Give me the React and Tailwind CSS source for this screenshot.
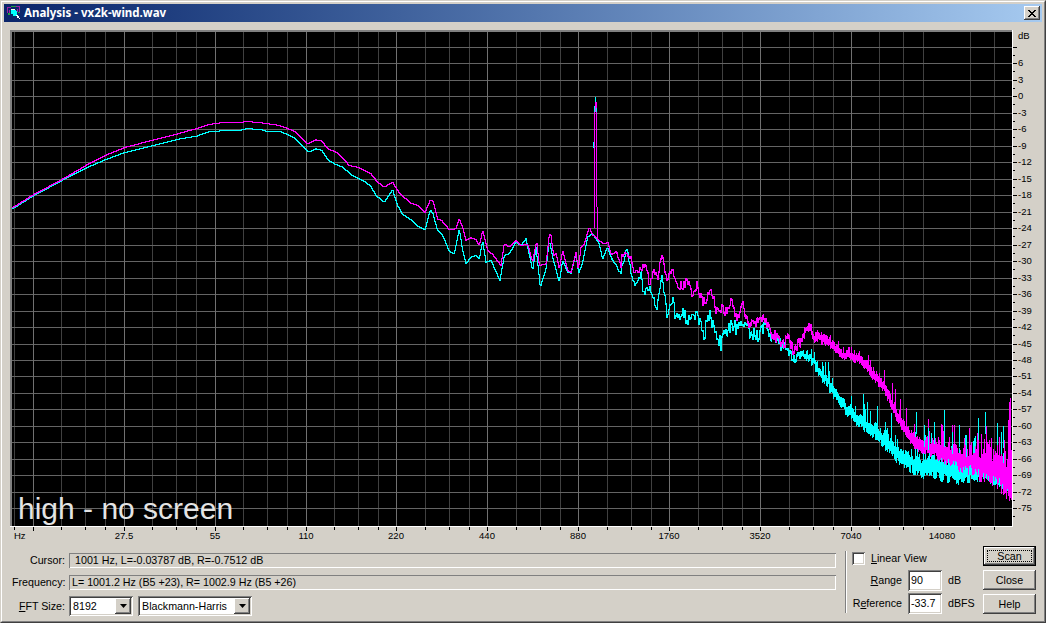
import React from 'react';

const RAISED =
  'shadow-[inset_-1px_-1px_0_#404040,inset_1px_1px_0_#ffffff,inset_-2px_-2px_0_#808080,inset_2px_2px_0_#d4d0c8]';
const SUNKEN =
  'shadow-[inset_1px_1px_0_#808080,inset_-1px_-1px_0_#ffffff,inset_2px_2px_0_#404040,inset_-2px_-2px_0_#d4d0c8]';

// zoomed crop readings -> page pixels
const crop = (ox, oy, pts) => pts.map(([x, y]) => [ox + x / 3, oy + y / 3]);

const MAGENTA = [
  [12, 207], [33, 194], [61, 179], [85, 165], [105, 154.5], [124, 147], [152, 139.5], [176, 133.5], [196, 128], [208, 124],
  ...crop(220, 110, [[0, 37], [60, 37], [70, 34], [90, 34], [130, 38], [170, 44], [200, 54], [220, 62], [240, 80], [260, 100], [285, 88], [303, 92], [320, 115], [350, 127], [385, 165], [410, 170], [450, 190], [470, 215], [490, 230], [515, 215], [535, 248], [570, 278], [590, 285], [612, 307], [628, 268], [636, 272], [650, 325]]),
  ...crop(420, 90, [[0, 360], [15, 365], [25, 328], [35, 333], [48, 385], [62, 390], [85, 418], [105, 415], [115, 385], [125, 410], [135, 450], [150, 442], [165, 447], [175, 465], [185, 420], [200, 480], [215, 492], [240, 525], [250, 460], [265, 470], [285, 450], [300, 465], [320, 460], [335, 515], [347, 450], [355, 525], [375, 520], [385, 432], [390, 435], [398, 495], [405, 488], [415, 535], [425, 480], [440, 540], [450, 545], [465, 485], [472, 540], [480, 470], [490, 460], [505, 410], [515, 435]]),
  [593, 235], [598, 240],
  ...crop(420, 90, [[550, 460], [560, 455], [572, 495], [585, 480], [600, 530]]),
  ...crop(620, 230, [[0, 75], [15, 70], [30, 85], [40, 130], [55, 120], [75, 100], [85, 160], [100, 120], [110, 145], [122, 75], [140, 150], [155, 115], [175, 170], [200, 155], [215, 190], [228, 160], [240, 205], [255, 215], [270, 175], [285, 235], [320, 240], [330, 205], [345, 265], [365, 225], [385, 285], [430, 260], [450, 310], [470, 320], [490, 345], [500, 320], [520, 360], [565, 285], [580, 320], [620, 330], [660, 370]]),
  ...crop(800, 320, [[180, 115], [215, 160], [250, 200], [280, 270], [310, 320], [340, 365], [400, 385], [470, 410], [530, 430], [560, 440], [600, 460], [632, 500]]),
];

const CYAN = [
  [12, 208], [33, 195], [61, 180], [85, 167.5], [105, 159], [124, 152], [152, 145], [176, 139], [196, 135.5], [207, 131.5],
  ...crop(220, 110, [[0, 61], [50, 61], [75, 55], [115, 56], [135, 62], [175, 62], [200, 72], [220, 82], [262, 125], [285, 115], [303, 120], [320, 147], [340, 160], [365, 170], [390, 192], [430, 212], [450, 228], [465, 255], [490, 275], [515, 238], [530, 285], [545, 312], [570, 328], [590, 347], [612, 358], [628, 298], [636, 310], [650, 362]]),
  ...crop(420, 90, [[0, 415], [10, 415], [25, 360], [35, 370], [50, 420], [65, 435], [85, 482], [100, 490], [115, 415], [125, 480], [135, 520], [150, 500], [165, 495], [175, 505], [185, 450], [195, 515], [210, 510], [237, 570], [250, 495], [265, 490], [285, 455], [300, 465], [315, 445], [335, 540], [345, 470], [358, 590], [375, 535], [385, 450], [395, 500], [415, 575], [425, 510], [440, 545], [450, 548], [465, 490], [473, 550], [485, 515], [500, 440], [515, 430]]),
  [593, 235], [598, 243],
  ...crop(420, 90, [[545, 505], [560, 470], [575, 510], [600, 550]]),
  ...crop(620, 230, [[0, 120], [18, 52], [30, 125], [40, 165], [60, 130], [70, 200], [78, 170], [95, 185], [108, 245], [122, 135], [140, 260], [155, 200], [165, 270], [185, 235], [200, 285], [215, 235], [235, 270], [250, 310], [265, 250], [300, 340], [320, 290], [345, 290], [375, 290], [410, 320], [430, 290], [480, 340], [520, 380], [560, 370]]),
  ...crop(800, 320, [[130, 260], [170, 295], [230, 340], [290, 400], [340, 430], [420, 445], [480, 455], [560, 460], [620, 500], [632, 510]]),
];

const lerp = (pts, x) => {
  let i = 1;
  while (i < pts.length - 1 && pts[i][0] < x) i++;
  const [x0, y0] = pts[i - 1];
  const [x1, y1] = pts[i];
  return y0 + ((y1 - y0) * (x - x0)) / (x1 - x0 || 1);
};

const makeRandom = (seed) => {
  let s = seed;
  return () => {
    s = (s * 1664525 + 1013904223) % 4294967296;
    return s / 4294967296;
  };
};

// one vertical run per pixel column, like the analyser's own non antialiased plot
const tracePath = (pts, { seed, thick, jitter, spikeChance, spikeSize, extras }) => {
  const rnd = makeRandom(seed);
  let d = '';
  let prev = lerp(pts, 12);
  for (let x = 12; x < 1012; x++) {
    const y = lerp(pts, x) + (rnd() - 0.5) * lerp(jitter, x);
    const t = lerp(thick, x);
    const wobble = t > 1 ? (rnd() - 0.5) * t * 0.6 : 0;
    let top = Math.min(prev, y) - t / 2 + wobble;
    const bottom = Math.max(prev, y) + t / 2 + wobble;
    if (rnd() < lerp(spikeChance, x)) top -= rnd() * lerp(spikeSize, x);
    d += `M${x}.5 ${Math.round(top)}V${Math.round(bottom) + 1}`;
    prev = y;
  }
  extras.forEach(([x, a, b]) => {
    d += `M${x}.5 ${a}V${b}`;
  });
  return d;
};

const magentaPath = tracePath(MAGENTA, {
  seed: 7,
  thick: [[12, 0], [610, 0], [690, 0.5], [780, 1.5], [840, 5], [900, 8], [950, 14], [1000, 26], [1012, 30]],
  jitter: [[12, 0], [600, 0], [625, 4], [700, 10], [790, 10], [850, 3], [1012, 3]],
  spikeChance: [[12, 0], [780, 0], [800, 0.2], [900, 0.25], [1012, 0.4]],
  spikeSize: [[12, 0], [800, 5], [880, 9], [905, 22], [1012, 26]],
  extras: [[594, 112, 228], [595, 102, 112], [596, 102, 207], [597, 207, 238], [1008, 420, 494], [1009, 402, 496], [1010, 398, 498]],
});

const cyanPath = tracePath(CYAN, {
  seed: 21,
  thick: [[12, 0], [610, 0], [700, 0.5], [790, 1.5], [840, 7], [900, 12], [950, 17], [1000, 8], [1012, 6]],
  jitter: [[12, 0], [600, 0], [625, 5], [700, 14], [760, 14], [820, 8], [850, 3], [1012, 3]],
  spikeChance: [[12, 0], [790, 0], [820, 0.2], [900, 0.3], [1012, 0.3]],
  spikeSize: [[12, 0], [800, 6], [840, 20], [900, 28], [1012, 34]],
  extras: [],
});

// cyan peaks that stand clear of the magenta band
const cyanPeaks = [
  [593, 142, 6], [594, 106, 6], [595, 97, 5], [596, 108, 4],
  [916, 412, 22], [924, 425, 22], [928, 428, 22], [934, 422, 22], [944, 410, 22], [952, 432, 22], [959, 425, 22],
  [966, 435, 22], [978, 418, 22], [985, 412, 22], [997, 423, 22], [1001, 432, 22], [1003, 426, 22],
]
  .map(([x, y, h]) => `M${x}.5 ${y}V${y + h}`)
  .join('');

const OCTAVES = ['13.75', '27.5', '55', '110', '220', '440', '880', '1760', '3520', '7040', '14080'];
const majorX = (k) => Math.floor(33.3 + 90.9 * k);
const minorX = [];
minorX.push(14);
OCTAVES.forEach((_, k) => {
  [28.5, 52.5, 72.5].forEach((off) => {
    const x = Math.floor(33.3 + 90.9 * k + off);
    if (x < 1012) minorX.push(x);
  });
});

const rowY = (n) => Math.round(96.3 + 16.48 * n);
const rows = [];
for (let n = -3; n <= 25; n++) rows.push(n);

const PlotChart = () => (
  <svg width="1032" height="514" viewBox="10 30 1032 514" className="block shrink-0">
    <rect x="10" y="30" width="1003" height="497" fill="#ffffff" />
    <rect x="10" y="30" width="1002" height="496" fill="#808080" />
    <rect x="12" y="32" width="1000" height="494" fill="#000000" />
    <g shapeRendering="crispEdges" strokeWidth="1">
      {minorX.map((x) => (
        <path key={x} d={`M${x}.5 32V526`} stroke="#404040" />
      ))}
      {rows.map((n) => (
        <path key={n} d={`M12 ${rowY(n)}.5H1012`} stroke="#646464" />
      ))}
      {OCTAVES.map((_, k) =>
        k > 9 ? null : <path key={k} d={`M${majorX(k)}.5 32V526`} stroke="#707070" />
      )}
      <path d={cyanPath} stroke="#00ffff" fill="none" />
      <path d={magentaPath} stroke="#ff00ff" fill="none" />
      <path d={cyanPeaks} stroke="#00ffff" fill="none" />
      {minorX.map((x) => (
        <path key={x} d={`M${x}.5 527V530`} stroke="#000000" />
      ))}
      {OCTAVES.map((_, k) =>
        k > 9 ? null : <path key={k} d={`M${majorX(k)}.5 527V531`} stroke="#000000" />
      )}
      {rows.map((n) => (
        <path key={n} d={`M1013 ${rowY(n)}.5H1017`} stroke="#000000" />
      ))}
      {rows.map((n) => (
        <path key={n} d={`M1013 ${rowY(n) + 8}.5H1015`} stroke="#000000" />
      ))}
    </g>
    <text x="18" y="519" fontSize="30" fill="#e4e4e4">high - no screen</text>
    <g fontSize="9.5" fill="#000000">
      <text x="14" y="539">Hz</text>
      {OCTAVES.slice(1).map((label, i) => (
        <text key={label} x={majorX(i + 1)} y="539" textAnchor="middle">{label}</text>
      ))}
      <text x="1018" y="38.5">dB</text>
      {rows.slice(1).map((n) => (
        <text key={n} x="1018" y={rowY(n) + 3}>{-3 * n}</text>
      ))}
    </g>
  </svg>
);

const ComboArrow = () => (
  <div className={`w-4 h-4 bg-[#d4d0c8] flex items-center justify-center ${RAISED}`}>
    <svg width="7" height="4" viewBox="0 0 7 4">
      <path d="M0 0h7L3.5 4z" fill="#000000" />
    </svg>
  </div>
);

const Combo = ({ value, className }) => (
  <div className={`h-5 bg-white flex items-center justify-between pl-[4px] pr-[2px] ${SUNKEN} ${className}`}>
    <span>{value}</span>
    <ComboArrow />
  </div>
);

const StaticField = ({ text, className }) => (
  <div className={`flex-1 h-[15px] flex items-center bg-[#d4d0c8] shadow-[inset_1px_1px_0_#808080,inset_-1px_-1px_0_#ffffff] ${className}`}>
    {text}
  </div>
);

const FieldLabel = ({ children }) => (
  <span className="w-[53px] text-right shrink-0">{children}</span>
);

const NumberRow = ({ label, value, unit }) => (
  <div className="flex items-center h-[21px]">
    <span className="w-[50px] text-right">{label}</span>
    <div className={`w-[34px] h-[21px] ml-[6px] bg-white flex items-center pl-[3px] ${SUNKEN}`}>{value}</div>
    <span className="ml-[6px]">{unit}</span>
  </div>
);

const Button = ({ label, className }) => (
  <button type="button" className={`w-[53px] bg-[#d4d0c8] flex items-center justify-center ${RAISED} ${className}`}>
    {label}
  </button>
);

export default function App() {
  return (
    <div className="w-[1046px] h-[623px] overflow-hidden font-['Liberation_Sans',Arial,sans-serif] text-[10.7px] text-black border border-t-[#d4d0c8] border-l-[#d4d0c8] border-r-[#404040] border-b-[#404040]">
      <div className="h-full bg-[#d4d0c8] border border-t-white border-l-white border-r-[#808080] border-b-[#808080] p-[2px] flex flex-col">
        <div className="h-[18px] shrink-0 flex items-center pl-[2px] pr-[2px] bg-gradient-to-r from-[#0a246a] to-[#a6caf0]">
          <svg width="16" height="16" viewBox="0 0 16 16" className="shrink-0" shapeRendering="crispEdges">
            <path d="M1 2h4v1H1zM10 1h4v1h-4zM1 3h1v5H1zM13 2h1v5h-1zM3 5h1v3H3zM11 4h1v3h-1z" fill="#a020a0" />
            <path d="M5 1h5v1H5zM2 8h2v2H2zM12 7h2v1h-2z" fill="#20a040" />
            <path d="M5 5h5v1H5zM5 6h6v3H5zM7 9h4v2H7z" fill="#00ffff" />
            <path d="M5 4h4v1H5zM10 10h2v1h-2zM11 11h2v2h-2zM13 13h1v1h-1z" fill="#ffffff" />
            <path d="M4 5h1v4H4zM5 9h2v1H5zM7 11h3v1H7z" fill="#003060" />
          </svg>
          <span className="ml-[2px] font-['Noto_Sans',sans-serif] font-bold text-[11.5px] text-white leading-none">
            Analysis - vx2k-wind.wav
          </span>
          <div className={`ml-auto w-4 h-[14px] bg-[#d4d0c8] flex items-center justify-center ${RAISED}`}>
            <svg width="8" height="7" viewBox="0 0 8 7" shapeRendering="crispEdges">
              <path d="M0 0h2v1h1v1h2V1h1V0h2v1H7v1H6v1H5v1h1v1h1v1h1v1H6V6H5V5H3v1H2v1H0V6h1V5h1V4h1V3H2V2H1V1H0z" fill="#000000" />
            </svg>
          </div>
        </div>

        <div className="pl-[6px] pt-[8px] shrink-0">
          <PlotChart />
        </div>

        <div className="flex items-start">
          <div className="ml-[8px] mt-[8px] w-[824px] flex flex-col">
            <div className="flex items-center gap-[4px]">
              <FieldLabel>Cursor:</FieldLabel>
              <StaticField text="1001 Hz, L=-0.03787 dB, R=-0.7512 dB" className="pl-[6px]" />
            </div>
            <div className="flex items-center gap-[4px] mt-[6px]">
              <FieldLabel>Frequency:</FieldLabel>
              <StaticField text="L= 1001.2 Hz (B5 +23), R= 1002.9 Hz (B5 +26)" className="pl-[3px]" />
            </div>
            <div className="flex items-center gap-[4px] mt-[6px]">
              <FieldLabel><span className="underline">F</span>FT Size:</FieldLabel>
              <Combo value="8192" className="w-[64px]" />
              <Combo value="Blackmann-Harris" className="w-[114px] ml-px" />
            </div>
          </div>

          <div className="ml-[9px] mt-[7px] w-[2px] h-[62px] bg-[#808080] border-r border-white" />

          <div className="ml-[5px] mt-[8px] w-[131px] flex flex-col">
            <div className="flex items-center h-[13px]">
              <div className={`w-[13px] h-[13px] bg-white ${SUNKEN}`} />
              <span className="ml-[6px]"><span className="underline">L</span>inear View</span>
            </div>
            <div className="mt-[5px]">
              <NumberRow label={<><span className="underline">R</span>ange</>} value="90" unit="dB" />
            </div>
            <div className="mt-[2px]">
              <NumberRow label={<>R<span className="underline">e</span>ference</>} value="-33.7" unit="dBFS" />
            </div>
          </div>

          <div className="mt-[2px] flex flex-col">
            <div className="w-[53px] h-[20px] border border-black">
              <div className={`h-full bg-[#d4d0c8] flex items-center justify-center p-[3px] ${RAISED}`}>
                <span className="w-full h-full flex items-center justify-center border border-dotted border-black">Scan</span>
              </div>
            </div>
            <Button label="Close" className="h-[20px] mt-[4px]" />
            <Button label="Help" className="h-[20px] mt-[4px]" />
          </div>
        </div>
      </div>
    </div>
  );
}
